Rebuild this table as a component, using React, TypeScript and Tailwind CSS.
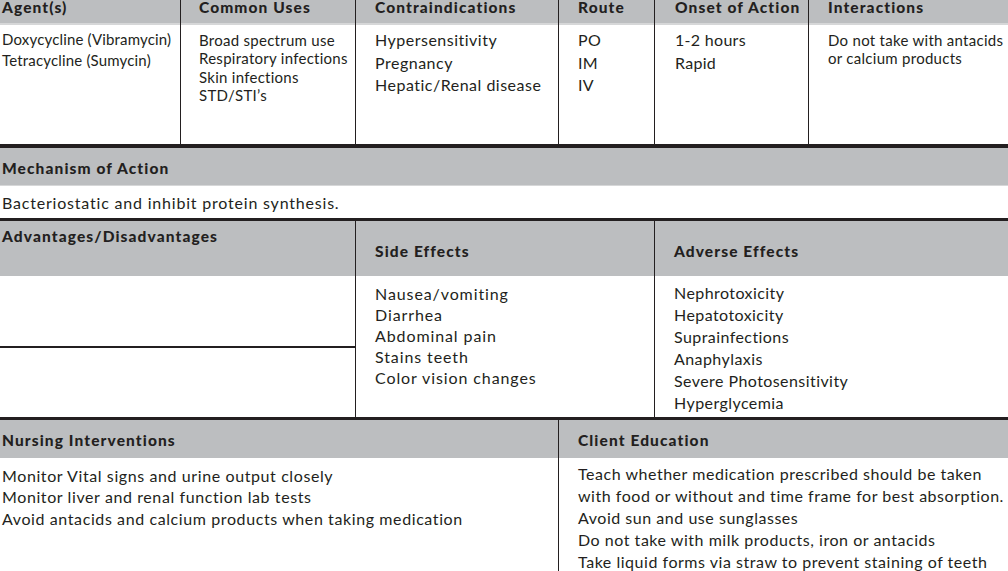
const HEAD = "bg-[#bcbec0] font-black text-[15.5px] tracking-[1.1px]";
const LINE = "border-[#231f20]";

const topCols = [
  { title: "Agent(s)", w: "w-[181px]", pl: "pl-[2px]", text: "text-[15px] leading-[21px] pt-[4px] tracking-[0.17px]", items: ["Doxycycline (Vibramycin)", "Tetracycline (Sumycin)"] },
  { title: "Common Uses", w: "w-[175px]", pl: "pl-[18px]", text: "text-[15px] leading-[18.5px] pt-[5.5px] tracking-[0.27px]", items: ["Broad spectrum use", "Respiratory infections", "Skin infections", "STD/STI’s"] },
  { title: "Contraindications", w: "w-[203px]", pl: "pl-[19px]", text: "text-[16px] leading-[22.2px] pt-[4.4px] tracking-[0.5px]", items: ["Hypersensitivity", "Pregnancy", "Hepatic/Renal disease"] },
  { title: "Route", w: "w-[96px]", pl: "pl-[19px]", text: "text-[16px] leading-[22.2px] pt-[4.4px] tracking-[0.3px]", items: ["PO", "IM", "IV"] },
  { title: "Onset of Action", w: "w-[154px]", pl: "pl-[20px]", text: "text-[16px] leading-[22.2px] pt-[4.4px] tracking-[0.3px]", items: ["1-2 hours", "Rapid"] },
  { title: "Interactions", w: "flex-1", pl: "pl-[19px]", text: "text-[15px] leading-[18.6px] pt-[5.6px] tracking-[0.28px]", items: ["Do not take with antacids", "or calcium products"] },
];

const sideEffects = ["Nausea/vomiting", "Diarrhea", "Abdominal pain", "Stains teeth", "Color vision changes"];
const adverseEffects = [
  "Nephrotoxicity",
  "Hepatotoxicity",
  "Suprainfections",
  "Anaphylaxis",
  "Severe Photosensitivity",
  "Hyperglycemia",
];
const nursing = [
  "Monitor Vital signs and urine output closely",
  "Monitor liver and renal function lab tests",
  "Avoid antacids and calcium products when taking medication",
];
const education = [
  "Teach whether medication prescribed should be taken",
  "with food or without and time frame for best absorption.",
  "Avoid sun and use sunglasses",
  "Do not take with milk products, iron or antacids",
  "Take liquid forms via straw to prevent staining of teeth",
];

function Lines({ items }: { items: string[] }) {
  return (
    <>
      {items.map((t) => (
        <div key={t} className="whitespace-nowrap">
          {t}
        </div>
      ))}
    </>
  );
}

export default function App() {
  return (
    <div
      className="h-[571px] w-[1008px] overflow-hidden bg-white text-[#231f20]"
      style={{ fontFamily: "Lato, 'Open Sans', sans-serif" }}
    >
      {/* drug summary row */}
      <div className="flex h-[144px]">
        {topCols.map((c, i) => (
          <div
            key={c.title}
            className={`${c.w} flex flex-col ${i < topCols.length - 1 ? `border-r ${LINE}` : ""}`}
          >
            <div className={`${HEAD} ${c.pl} h-[25px] border-b-2 border-[#d6d7d8] leading-[15px]`}>
              {c.title}
            </div>
            <div className={`${c.pl} ${c.text} flex-1`}>
              <Lines items={c.items} />
            </div>
          </div>
        ))}
      </div>

      <div className="h-[4px] bg-[#231f20]" />

      {/* mechanism */}
      <div className={`${HEAD} h-[37px] pl-[2px] pt-[11px] leading-[18px]`}>Mechanism of Action</div>
      <div className="h-[33px] border-t border-[#d6d7d8] pl-[2px] pt-[7px] text-[16px] leading-[20px] tracking-[0.8px]">
        Bacteriostatic and inhibit protein synthesis.
      </div>

      <div className="h-[3px] bg-[#231f20]" />

      {/* effects */}
      <div className="flex h-[196px]">
        <div className={`flex w-[356px] flex-col border-r ${LINE}`}>
          <div className={`${HEAD} h-[55px] pl-[2px] pt-[6px] leading-[18px]`}>Advantages/Disadvantages</div>
          <div className="h-[70px]" />
          <div className="h-[2px] bg-[#231f20]" />
          <div className="flex-1" />
        </div>
        <div className={`flex w-[299px] flex-col border-r ${LINE}`}>
          <div className={`${HEAD} h-[55px] pl-[19px] pt-[21px] leading-[18px]`}>Side Effects</div>
          <div className="pl-[19px] pt-[7.3px] text-[16px] leading-[21px] tracking-[0.9px]">
            <Lines items={sideEffects} />
          </div>
        </div>
        <div className="flex flex-1 flex-col">
          <div className={`${HEAD} h-[55px] pl-[19px] pt-[21px] leading-[18px]`}>Adverse Effects</div>
          <div className="pl-[19px] pt-[6.2px] text-[16px] leading-[21.9px] tracking-[0.43px]">
            <Lines items={adverseEffects} />
          </div>
        </div>
      </div>

      <div className="h-[3px] bg-[#231f20]" />

      {/* nursing / education */}
      <div className="flex flex-1">
        <div className={`w-[559px] border-r ${LINE} h-[160px]`}>
          <div className={`${HEAD} h-[38px] pl-[2px] pt-[11px] leading-[18px]`}>Nursing Interventions</div>
          <div className="pl-[2px] pt-[6.7px] text-[16px] leading-[21.6px] tracking-[0.6px]">
            <Lines items={nursing} />
          </div>
        </div>
        <div className="flex-1">
          <div className={`${HEAD} h-[38px] pl-[19px] pt-[11px] leading-[18px]`}>Client Education</div>
          <div className="pl-[19px] pt-[4.9px] text-[16px] leading-[21.9px] tracking-[0.53px]">
            <Lines items={education} />
          </div>
        </div>
      </div>
    </div>
  );
}
